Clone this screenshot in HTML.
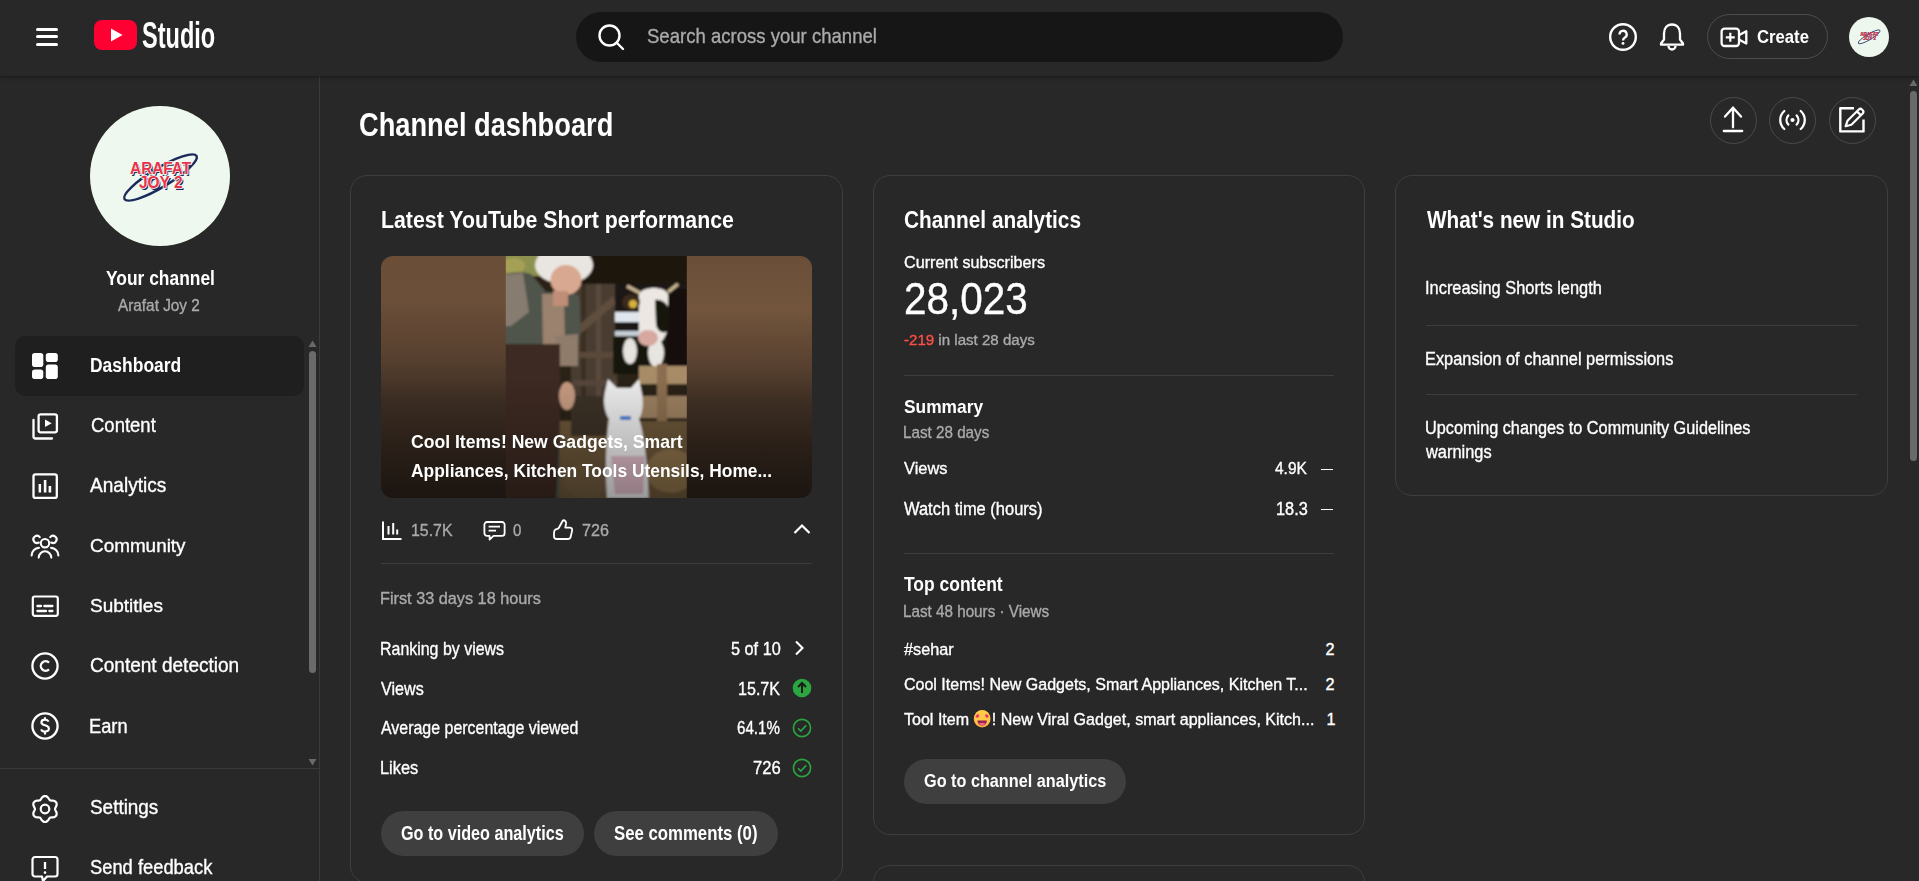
<!DOCTYPE html>
<html><head><meta charset="utf-8">
<style>
*{box-sizing:border-box;margin:0;padding:0}
html,body{width:1919px;height:881px;overflow:hidden;background:#282828;font-family:"Liberation Sans",sans-serif;color:#fff}
.abs{position:absolute}
svg{display:block}
#header{position:absolute;left:0;top:0;width:1919px;height:76px;background:#282828;box-shadow:0 1px 2px rgba(0,0,0,.22),0 2px 5px rgba(0,0,0,.12);z-index:5}
#sidebar{position:absolute;left:0;top:76px;width:320px;height:805px;border-right:1px solid #3a3a3a}
.t{position:absolute;white-space:nowrap;line-height:1;z-index:6;-webkit-text-stroke:0.35px currentColor}
.card{position:absolute;border:1px solid #3e3e3e;border-radius:17px}
.gray{color:#aaa}
.btn{position:absolute;background:#3f3f3f;border-radius:23px;font-weight:bold;color:#fff}
.div{position:absolute;height:1px;background:#3e3e3e}
.b{font-weight:bold}
.circ{width:47px;height:47px;border-radius:50%;border:1px solid #4a4a4a}
.emo{display:inline-block;width:18px;height:18px;vertical-align:-3px;margin:0 1px 0 4px}
</style></head><body>
<div id="header">
  <!-- hamburger -->
  <div class="abs" style="left:36px;top:28px;width:22px;height:3px;background:#fff;border-radius:2px"></div>
  <div class="abs" style="left:36px;top:35px;width:22px;height:3px;background:#fff;border-radius:2px"></div>
  <div class="abs" style="left:36px;top:43px;width:22px;height:3px;background:#fff;border-radius:2px"></div>
  <!-- logo -->
  <svg class="abs" style="left:94px;top:20px" width="44" height="30" viewBox="0 0 44 30"><rect x="0" y="0" width="43" height="30" rx="8" fill="#ff0033"/><path d="M17 8.5 L28.5 15 L17 21.5Z" fill="#fff"/></svg>
  <!-- search -->
  <div class="abs" style="left:576px;top:12px;width:767px;height:50px;background:#161616;border-radius:25px"></div>
  <svg class="abs" style="left:596px;top:22px" width="30" height="30" viewBox="0 0 30 30"><circle cx="13.5" cy="13.5" r="10" fill="none" stroke="#fff" stroke-width="2.4"/><path d="M20.5 20.5 L27 27" stroke="#fff" stroke-width="2.4" stroke-linecap="round"/></svg>
  <!-- help -->
  <svg class="abs" style="left:1607px;top:21px" width="32" height="32" viewBox="0 0 32 32"><circle cx="16" cy="16" r="12.8" fill="none" stroke="#fff" stroke-width="2.4"/><path d="M12.5 13.4 a3.6 3.6 0 1 1 5.4 3.1 c-1.3 0.8 -1.9 1.4 -1.9 3.1" fill="none" stroke="#fff" stroke-width="2.3"/><circle cx="16" cy="22.4" r="1.45" fill="#fff"/></svg>
  <!-- bell -->
  <svg class="abs" style="left:1658px;top:21px" width="28" height="32" viewBox="0 0 28 32"><path d="M14 3.5 c-5 0 -8 3.8 -8 9 v6 l-3 4 v1.2 h22 v-1.2 l-3 -4 v-6 c0 -5.2 -3 -9 -8 -9z" fill="none" stroke="#fff" stroke-width="2.3" stroke-linejoin="round"/><path d="M10.5 25 a3.5 3.5 0 0 0 7 0" fill="none" stroke="#fff" stroke-width="2.3"/></svg>
  <!-- create -->
  <div class="abs" style="left:1707px;top:14px;width:121px;height:45px;border:1px solid #4d4d4d;border-radius:23px"></div>
  <svg class="abs" style="left:1719px;top:25.6px" width="30" height="22" viewBox="0 0 30 22"><rect x="2.6" y="2.6" width="17.4" height="17.4" rx="3" fill="none" stroke="#fff" stroke-width="2.3"/><path d="M11.3 6.8 V15.8 M6.8 11.3 H15.8" stroke="#fff" stroke-width="2.2"/><path d="M20.3 9 L27.3 5.2 V17.6 L20.3 13.8" fill="none" stroke="#fff" stroke-width="2.3" stroke-linejoin="round"/></svg>
  <!-- avatar -->
  <div class="abs" style="left:1849px;top:17px;width:40px;height:40px;border-radius:50%;background:#eef7ee"></div>
  <svg class="abs" style="left:1856px;top:28px" width="26" height="18" viewBox="0 0 84 60">
  <ellipse cx="42.5" cy="29.5" rx="42" ry="9.5" transform="rotate(-31 42.5 29.5)" fill="none" stroke="#1b2a5c" stroke-width="2.6"/>
  <g font-family="Liberation Sans" font-weight="bold" font-size="16">
  <text x="13.5" y="28" textLength="61" lengthAdjust="spacingAndGlyphs" fill="#1b2a5c">ARAFAT</text>
  <text x="22.5" y="41.6" textLength="43.5" lengthAdjust="spacingAndGlyphs" fill="#1b2a5c">JOY 2</text>
  <text x="12.1" y="26.1" textLength="61" lengthAdjust="spacingAndGlyphs" fill="#e8334a">ARAFAT</text>
  <text x="21" y="39.8" textLength="43.5" lengthAdjust="spacingAndGlyphs" fill="#e8334a">JOY 2</text>
  </g>
</svg>
</div>

<div id="sidebar">
</div>
<!-- sidebar content (absolute page coords) -->
<div class="abs" style="left:90px;top:106px;width:140px;height:140px;border-radius:50%;background:#eef8ee"></div>
<svg class="abs" style="left:118px;top:148px" width="84" height="60" viewBox="0 0 84 60">
  <ellipse cx="42.5" cy="29.5" rx="42" ry="9.5" transform="rotate(-31 42.5 29.5)" fill="none" stroke="#1b2a5c" stroke-width="2.4"/>
  <g font-family="Liberation Sans" font-weight="bold" font-size="16">
  <text x="13.5" y="28" textLength="61" lengthAdjust="spacingAndGlyphs" fill="#1b2a5c">ARAFAT</text>
  <text x="22.5" y="41.6" textLength="43.5" lengthAdjust="spacingAndGlyphs" fill="#1b2a5c">JOY 2</text>
  <text x="12.1" y="26.1" textLength="61" lengthAdjust="spacingAndGlyphs" fill="#e8334a" stroke="#f4fbf4" stroke-width="1.6" paint-order="stroke">ARAFAT</text>
  <text x="21" y="39.8" textLength="43.5" lengthAdjust="spacingAndGlyphs" fill="#e8334a" stroke="#f4fbf4" stroke-width="1.6" paint-order="stroke">JOY 2</text>
  </g>
</svg>
<div class="abs" style="left:15px;top:336px;width:289px;height:60px;border-radius:11px;background:#1f1f1f"></div>
<!-- nav icons -->
<svg class="abs" style="left:30px;top:351px" width="30" height="30" viewBox="0 0 30 30">
  <rect x="2" y="2" width="11.3" height="14" rx="2.8" fill="#fff"/>
  <rect x="15.8" y="2" width="12" height="9" rx="2.8" fill="#fff"/>
  <rect x="2" y="18.6" width="11.3" height="9.4" rx="2.8" fill="#fff"/>
  <rect x="15.8" y="13.6" width="12" height="14.4" rx="2.8" fill="#fff"/>
</svg>
<svg class="abs" style="left:30px;top:411px" width="30" height="30" viewBox="0 0 30 30">
  <rect x="8.6" y="3.3" width="18.3" height="18" rx="2" fill="none" stroke="#fff" stroke-width="2.3"/>
  <path d="M3.5 9 V25.5 a2 2 0 0 0 2 2 H22" fill="none" stroke="#fff" stroke-width="2.3" stroke-linecap="round"/>
  <path d="M15 8.5 L21.7 12.3 L15 16Z" fill="#fff"/>
</svg>
<svg class="abs" style="left:30px;top:471px" width="30" height="30" viewBox="0 0 30 30">
  <rect x="3.5" y="3.3" width="23.3" height="23.6" rx="2" fill="none" stroke="#fff" stroke-width="2.3"/>
  <rect x="8.6" y="13" width="2.5" height="8.5" fill="#fff"/>
  <rect x="13.8" y="9" width="2.6" height="12.5" fill="#fff"/>
  <rect x="18.6" y="15" width="2.6" height="6.5" fill="#fff"/>
</svg>
<svg class="abs" style="left:30px;top:531px" width="30" height="30" viewBox="0 0 30 30"><circle cx="15" cy="12.2" r="4.2" fill="none" stroke="#fff" stroke-width="2.1"/><path d="M8.80 11.52 A3.6 3.6 0 1 1 9.76 6.09 M21.20 11.52 A3.6 3.6 0 1 0 20.24 6.09 M8.70 26.60 A6.3 6.3 0 0 1 21.30 26.60 M1.60 24.50 A7.6 7.6 0 0 1 8.93 16.90 M28.40 24.50 A7.6 7.6 0 0 0 21.07 16.90" fill="none" stroke="#fff" stroke-width="2.1" stroke-linecap="round"/></svg>
<svg class="abs" style="left:30px;top:591px" width="30" height="30" viewBox="0 0 30 30">
  <rect x="2.8" y="5.5" width="25" height="19.3" rx="2" fill="none" stroke="#fff" stroke-width="2.2"/>
  <path d="M7.4 15 H11 M14.3 15 H22.4 M7.4 20 H16 M19.4 20 H22.4" stroke="#fff" stroke-width="2.3" stroke-linecap="round"/>
</svg>
<svg class="abs" style="left:30px;top:651px" width="30" height="30" viewBox="0 0 30 30">
  <circle cx="15" cy="15" r="12.6" fill="none" stroke="#fff" stroke-width="2.3"/>
  <path d="M19 11.6 a4.8 4.8 0 1 0 0 6.8" fill="none" stroke="#fff" stroke-width="2.3"/>
</svg>
<svg class="abs" style="left:30px;top:711px" width="30" height="30" viewBox="0 0 30 30">
  <circle cx="15" cy="15" r="12.6" fill="none" stroke="#fff" stroke-width="2.3"/>
  <path d="M18.6 10.6 c-0.6 -1.3 -2 -2 -3.6 -2 c-2.1 0 -3.6 1.1 -3.6 2.8 c0 3.9 7.5 2 7.5 6.1 c0 1.8 -1.7 3 -3.9 3 c-1.8 0 -3.3 -0.8 -3.9 -2.2 M15 6.3 V8.6 M15 20.5 V23.6" fill="none" stroke="#fff" stroke-width="2.1"/>
</svg>
<div class="abs" style="left:0;top:768px;width:319px;height:1px;background:#3a3a3a"></div>
<svg class="abs" style="left:30px;top:794px" width="30" height="30" viewBox="0 0 30 30">
  <path id="gear" fill="none" stroke="#fff" stroke-width="2.2" stroke-linejoin="round" d="M15.00 2.00 L15.84 2.12 L16.65 2.47 L17.39 3.00 L18.03 3.68 L18.59 4.42 L19.07 5.17 L19.52 5.83 L20.00 6.34 L20.68 6.50 L21.48 6.55 L22.37 6.60 L23.29 6.71 L24.20 6.93 L25.03 7.30 L25.73 7.83 L26.26 8.50 L26.58 9.29 L26.68 10.16 L26.58 11.07 L26.32 11.97 L25.96 12.82 L25.55 13.61 L25.20 14.33 L25.00 15.00 L25.20 15.67 L25.55 16.39 L25.96 17.18 L26.32 18.03 L26.58 18.93 L26.68 19.84 L26.58 20.71 L26.26 21.50 L25.73 22.17 L25.03 22.70 L24.20 23.07 L23.29 23.29 L22.37 23.40 L21.48 23.45 L20.68 23.50 L20.00 23.66 L19.52 24.17 L19.07 24.83 L18.59 25.58 L18.03 26.32 L17.39 27.00 L16.65 27.53 L15.84 27.88 L15.00 28.00 L14.16 27.88 L13.35 27.53 L12.61 27.00 L11.97 26.32 L11.41 25.58 L10.93 24.83 L10.48 24.17 L10.00 23.66 L9.32 23.50 L8.52 23.45 L7.63 23.40 L6.71 23.29 L5.80 23.07 L4.97 22.70 L4.27 22.17 L3.74 21.50 L3.42 20.71 L3.32 19.84 L3.42 18.93 L3.68 18.03 L4.04 17.18 L4.45 16.39 L4.80 15.67 L5.00 15.00 L4.80 14.33 L4.45 13.61 L4.04 12.82 L3.68 11.97 L3.42 11.07 L3.32 10.16 L3.42 9.29 L3.74 8.50 L4.27 7.83 L4.97 7.30 L5.80 6.93 L6.71 6.71 L7.63 6.60 L8.52 6.55 L9.32 6.50 L10.00 6.34 L10.48 5.83 L10.93 5.17 L11.41 4.42 L11.97 3.68 L12.61 3.00 L13.35 2.47 L14.16 2.12Z"/>
  <circle cx="15" cy="15" r="4.3" fill="none" stroke="#fff" stroke-width="2.2"/>
</svg>
<svg class="abs" style="left:30px;top:854px" width="30" height="30" viewBox="0 0 30 30">
  <path d="M5 3 H25 a2.5 2.5 0 0 1 2.5 2.5 V20 a2.5 2.5 0 0 1 -2.5 2.5 H17 L13 27 L12 22.5 H5 a2.5 2.5 0 0 1 -2.5 -2.5 V5.5 a2.5 2.5 0 0 1 2.5 -2.5Z" fill="none" stroke="#fff" stroke-width="2.2" stroke-linejoin="round"/>
  <path d="M15 8 V15" stroke="#fff" stroke-width="2.3"/>
  <circle cx="15" cy="18.6" r="1.3" fill="#fff"/>
</svg>
<!-- nav labels -->
<!-- sidebar scrollbar -->
<svg class="abs" style="left:307px;top:339px" width="11" height="9" viewBox="0 0 11 9"><path d="M1.5 8 L5.5 1.5 L9.5 8Z" fill="#6a6a6a"/></svg>
<div class="abs" style="left:309px;top:351px;width:7px;height:322px;border-radius:4px;background:#6a6a6a"></div>
<svg class="abs" style="left:307px;top:758px" width="11" height="9" viewBox="0 0 11 9"><path d="M1.5 1 L5.5 7.5 L9.5 1Z" fill="#6a6a6a"/></svg>

<div id="main">
<!-- action circles -->
<div class="abs circ" style="left:1710px;top:97px"></div>
<div class="abs circ" style="left:1769px;top:97px"></div>
<div class="abs circ" style="left:1829px;top:97px"></div>
<svg class="abs" style="left:1720px;top:104px" width="26" height="30" viewBox="0 0 26 30"><path d="M13 4 V23.3 M5 12.6 L13 3.8 L21 12.6 M3.8 27 H22.2" fill="none" stroke="#fff" stroke-width="2.3" stroke-linecap="round"/></svg>
<svg class="abs" style="left:1777px;top:105px" width="31" height="30" viewBox="0 0 31 30"><circle cx="15.5" cy="15" r="2.1" fill="#fff"/><path d="M11.3 10.4 a7 7 0 0 0 0 9.2 M19.7 10.4 a7 7 0 0 1 0 9.2 M7.3 6 a12 12 0 0 0 0 18 M23.7 6 a12 12 0 0 1 0 18" fill="none" stroke="#fff" stroke-width="2.3" stroke-linecap="round"/></svg>
<svg class="abs" style="left:1837px;top:104px" width="30" height="30" viewBox="0 0 30 30"><path d="M17 4.2 H3.3 V27.4 H26.5 V15.5" fill="none" stroke="#fff" stroke-width="2.4" stroke-linejoin="round"/><path d="M8.6 22.3 L10.5 16.8 L21.8 5.5 a2.2 2.2 0 0 1 3.1 0 L25.7 6.3 a2.2 2.2 0 0 1 0 3.1 L14.4 20.7 Z M20 7.4 L23.8 11.2" fill="none" stroke="#fff" stroke-width="2.2" stroke-linejoin="round"/></svg>

<!-- cards -->
<div class="card" style="left:350px;top:175px;width:493px;height:708px"></div>
<div class="card" style="left:873px;top:175px;width:492px;height:660px"></div>
<div class="card" style="left:873px;top:865px;width:492px;height:300px"></div>
<div class="card" style="left:1395px;top:175px;width:493px;height:321px"></div>

<!-- card 1 -->
<div class="abs" id="thumb" style="left:381px;top:256px;width:431px;height:242px;border-radius:12px;overflow:hidden"><svg width="431" height="242" viewBox="0 0 431 242">
<defs>
<linearGradient id="sideL" x1="0" y1="0" x2="0" y2="1"><stop offset="0" stop-color="#6a4e38"/><stop offset="0.18" stop-color="#6b4f39"/><stop offset="0.39" stop-color="#5a4230"/><stop offset="0.6" stop-color="#3e2f24"/><stop offset="0.8" stop-color="#34271e"/><stop offset="1" stop-color="#2a2019"/></linearGradient>
<linearGradient id="sideR" x1="0" y1="0" x2="0" y2="1"><stop offset="0" stop-color="#6a4e38"/><stop offset="0.22" stop-color="#72553c"/><stop offset="0.42" stop-color="#5c4432"/><stop offset="0.6" stop-color="#413125"/><stop offset="0.8" stop-color="#34271e"/><stop offset="1" stop-color="#2a2019"/></linearGradient>
<linearGradient id="ovl" x1="0" y1="0" x2="0" y2="1"><stop offset="0" stop-color="#000" stop-opacity="0"/><stop offset="0.5" stop-color="#000" stop-opacity="0"/><stop offset="1" stop-color="#000" stop-opacity="0.35"/></linearGradient>
<filter id="bl" x="-5%" y="-5%" width="110%" height="110%"><feGaussianBlur stdDeviation="1.3"/></filter>
<clipPath id="cc"><rect x="124.8" y="0" width="181" height="242"/></clipPath>
</defs>
<rect x="0" y="0" width="125" height="242" fill="url(#sideL)"/>
<rect x="305" y="0" width="126" height="242" fill="url(#sideR)"/>
<g clip-path="url(#cc)"><g filter="url(#bl)">
 <rect x="120" y="-5" width="190" height="250" fill="#2c2119"/>
 <rect x="190" y="8" width="46" height="165" fill="#4a3c30"/>
 <rect x="200" y="15" width="5" height="150" fill="#3a2e24"/>
 <rect x="215" y="15" width="5" height="150" fill="#5a4a3c"/>
 <path d="M194 72 L232 40 L235 48 L197 80Z" fill="#5e4e3e"/>
 <rect x="192" y="96" width="44" height="6" fill="#5a4a3a"/>
 <rect x="192" y="124" width="44" height="6" fill="#54443a"/>
 <rect x="200" y="-5" width="110" height="33" fill="#1c1510"/>
 <rect x="234" y="28" width="76" height="60" fill="#1e1712"/>
 <rect x="120" y="-5" width="40" height="25" fill="#8d9150"/>
 <ellipse cx="132" cy="10" rx="12" ry="8" fill="#a5a056"/>
 <rect x="234" y="56" width="25" height="10" fill="#dfe6ee"/>
 <rect x="234" y="75" width="25" height="6" fill="#c4ccd4"/>
 <rect x="232" y="80" width="56" height="38" fill="#141210"/>
 <ellipse cx="249" cy="95" rx="7" ry="13" fill="#e6e2de"/>
 <ellipse cx="275" cy="97" rx="8" ry="14" fill="#e8e4e0"/>
 <rect x="286" y="33" width="25" height="78" fill="#121110"/>
 <path d="M258 38 C262 30 284 30 287 38 L287 70 C285 84 278 90 270 89 C261 88 257 80 258 72Z" fill="#ece7e2"/>
 <path d="M274 44 C281 43 288 48 288 56 L288 74 C283 79 276 76 275 68Z" fill="#151311"/>
 <ellipse cx="267" cy="82" rx="10" ry="8" fill="#d6a8a0"/>
 <path d="M246 30 L259 37 M297 28 L287 36" stroke="#c9b692" stroke-width="3.5"/>
 <ellipse cx="250" cy="46" rx="9" ry="8" fill="#3a2a1a"/>
 <ellipse cx="252" cy="48" rx="4" ry="4" fill="#d8b040"/>
 <rect x="258" y="110" width="52" height="18" fill="#a88c68"/>
 <rect x="258" y="140" width="52" height="22" fill="#9c8060"/>
 <rect x="276" y="108" width="10" height="72" fill="#8a6e50"/>
 <rect x="178" y="165" width="132" height="80" fill="#6a5438"/><ellipse cx="290" cy="215" rx="25" ry="22" fill="#8a7048"/><ellipse cx="205" cy="225" rx="22" ry="18" fill="#6e5a3e"/>
 <rect x="190" y="140" width="36" height="40" fill="#3a3028"/>
 <path d="M120 19 C130 16 142 15 150 18 L165 36 L190 36 L198 40 C200 60 200 76 197 91 L179 91 L179 242 L120 242Z" fill="#50544c"/>
 <path d="M120 19 L142 17 L148 56 L130 70 L120 70Z" fill="#877b70"/>
 <path d="M161 38 L183 38 L184 90 L162 90Z" fill="#9a826e"/>
 <path d="M174 80 L197 78 L197 110 L176 110Z" fill="#8f7b6a"/>
 <path d="M120 88 L179 88 L179 160 C178 200 176 230 175 242 L120 242Z" fill="#3c2c24"/>
 <ellipse cx="186" cy="140" rx="8" ry="14" fill="#c49a80"/>
 <ellipse cx="183" cy="9" rx="29" ry="19" fill="#e9e5e1"/>
 <ellipse cx="185" cy="24" rx="15.5" ry="15" fill="#d8a890"/>
 <rect x="172" y="35" width="15" height="15" fill="#c08e78"/>
 <path d="M224 136 L227 123 L236 132 L250 132 L258 123 L261 138 C263 150 261 158 258 163 C266 185 268 242 268 242 L226 242 C224 210 225 185 228 163 C223 155 222 145 224 136Z" fill="#edecec"/>
 <rect x="239" y="160" width="11" height="4" fill="#3a80d0"/>
 <path d="M230 200 L264 200 L262 238 L234 238Z" fill="#c87090" opacity="0.4"/>
</g></g>
<rect x="0" y="0" width="431" height="242" fill="url(#ovl)"/>
</svg>
</div>
<svg class="abs" style="left:380px;top:519px" width="24" height="24" viewBox="0 0 24 24"><path d="M3 2.5 V20 H21.5" fill="none" stroke="#fff" stroke-width="2"/><path d="M8.5 7 V15.5 M13.2 4 V15.5 M17.2 10.5 V15.5" stroke="#fff" stroke-width="2"/></svg>
<svg class="abs" style="left:482px;top:519px" width="26" height="24" viewBox="0 0 26 24"><path d="M5 3 H20 a2.6 2.6 0 0 1 2.6 2.6 V14.3 a2.6 2.6 0 0 1 -2.6 2.6 H11.5 L7.6 20.6 V16.9 H5 a2.6 2.6 0 0 1 -2.6 -2.6 V5.6 a2.6 2.6 0 0 1 2.6 -2.6Z" fill="none" stroke="#fff" stroke-width="1.8" stroke-linejoin="round"/><path d="M6.6 7.6 H18 M6.6 11.6 H14" stroke="#fff" stroke-width="1.8"/></svg>
<svg class="abs" style="left:551px;top:518px" width="24" height="24" viewBox="0 0 24 24"><path d="M4.2 11.8 C3.2 12.6 3 13.5 3 15 V18.5 C3 20.3 4.3 21 6 21 H16.8 C18.4 21 19.4 20.2 19.7 18.7 L21.1 12.6 C21.5 10.8 20.4 9.6 18.7 9.6 H14.3 L15 6 C15.4 3.6 14 2 12 2.3 L7.6 10.2 C6.6 11.3 5.3 11 4.2 11.8Z" fill="none" stroke="#fff" stroke-width="1.8" stroke-linejoin="round"/></svg>
<svg class="abs" style="left:791px;top:519px" width="22" height="20" viewBox="0 0 22 20"><path d="M3.5 14 L11 6.5 L18.5 14" fill="none" stroke="#fff" stroke-width="2.2"/></svg>
<div class="div" style="left:381px;top:563px;width:431px"></div>
<svg class="abs" style="left:790px;top:638px" width="20" height="20" viewBox="0 0 20 20"><path d="M6 3.5 L12.5 10 L6 16.5" fill="none" stroke="#fff" stroke-width="2.1"/></svg>
<svg class="abs" style="left:791px;top:677px" width="22" height="22" viewBox="0 0 22 22"><circle cx="11" cy="11" r="9.3" fill="#2ba640"/><path d="M11 16 V6.5 M7 10 L11 6 L15 10" fill="none" stroke="#1a1a1a" stroke-width="2"/></svg>
<svg class="abs" style="left:791px;top:717px" width="22" height="22" viewBox="0 0 22 22"><circle cx="11" cy="11" r="8.6" fill="none" stroke="#2ba640" stroke-width="1.6"/><path d="M7 11.2 L9.8 14 L15.2 8.4" fill="none" stroke="#2ba640" stroke-width="1.6"/></svg>
<svg class="abs" style="left:791px;top:757px" width="22" height="22" viewBox="0 0 22 22"><circle cx="11" cy="11" r="8.6" fill="none" stroke="#2ba640" stroke-width="1.6"/><path d="M7 11.2 L9.8 14 L15.2 8.4" fill="none" stroke="#2ba640" stroke-width="1.6"/></svg>
<div class="btn" style="left:381px;top:811px;width:203px;height:45px"></div>
<div class="btn" style="left:594px;top:811px;width:184px;height:45px"></div>

<!-- card 2 -->
<div class="div" style="left:904px;top:375px;width:430px"></div>
<div class="abs" style="left:1321px;top:468.6px;width:11.5px;height:1.7px;background:#fff"></div>
<div class="abs" style="left:1321px;top:508.5px;width:11.5px;height:1.7px;background:#fff"></div>
<div class="div" style="left:904px;top:553px;width:430px"></div>
<div class="btn" style="left:904px;top:759px;width:222px;height:45px"></div>

<!-- card 3 -->
<div class="div" style="left:1426px;top:325px;width:431px"></div>
<div class="div" style="left:1426px;top:394px;width:431px"></div>

<!-- page scrollbar -->
<svg class="abs" style="left:1908px;top:78px" width="11" height="9" viewBox="0 0 11 9"><path d="M1.5 8 L5.5 1.5 L9.5 8Z" fill="#6a6a6a"/></svg>
<div class="abs" style="left:1910px;top:91px;width:7px;height:370px;border-radius:4px;background:#6a6a6a"></div>
</div>
<div class="t" id="studio" style="left:142.00px;top:17.96px;font-size:36.52px;color:#fff;font-weight:bold;-webkit-text-stroke:0;transform:scaleX(0.6441);transform-origin:0 0;">Studio</div>
<div class="t" id="search" style="left:646.50px;top:26.13px;font-size:20.43px;color:#aaa;transform:scaleX(0.9082);transform-origin:0 0;">Search across your channel</div>
<div class="t" id="create" style="left:1756.70px;top:28.23px;font-size:18.55px;color:#fff;font-weight:bold;-webkit-text-stroke:0;transform:scaleX(0.9002);transform-origin:0 0;">Create</div>
<div class="t" id="ych" style="left:105.90px;top:268.62px;font-size:19.86px;color:#fff;font-weight:bold;-webkit-text-stroke:0;transform:scaleX(0.8758);transform-origin:0 0;">Your channel</div>
<div class="t" id="ajoy" style="left:118.00px;top:297.08px;font-size:16.38px;color:#aaa;transform:scaleX(0.9370);transform-origin:0 0;">Arafat Joy 2</div>
<div class="t" id="n1" style="left:89.70px;top:354.75px;font-size:20.29px;color:#fff;font-weight:bold;-webkit-text-stroke:0;transform:scaleX(0.8618);transform-origin:0 0;">Dashboard</div>
<div class="t" id="n2" style="left:90.50px;top:415.62px;font-size:19.86px;color:#fff;transform:scaleX(0.9316);transform-origin:0 0;">Content</div>
<div class="t" id="n3" style="left:90.20px;top:474.88px;font-size:20.14px;color:#fff;transform:scaleX(0.9477);transform-origin:0 0;">Analytics</div>
<div class="t" id="n4" style="left:90.00px;top:536.12px;font-size:19.28px;color:#fff;transform:scaleX(0.9806);transform-origin:0 0;">Community</div>
<div class="t" id="n5" style="left:90.00px;top:596.36px;font-size:18.99px;color:#fff;transform:scaleX(1.0016);transform-origin:0 0;">Subtitles</div>
<div class="t" id="n6" style="left:90.00px;top:656.25px;font-size:19.71px;color:#fff;transform:scaleX(0.9666);transform-origin:0 0;">Content detection</div>
<div class="t" id="n7" style="left:89.10px;top:715.51px;font-size:20.58px;color:#fff;transform:scaleX(0.8888);transform-origin:0 0;">Earn</div>
<div class="t" id="n8" style="left:90.00px;top:798.25px;font-size:19.71px;color:#fff;transform:scaleX(0.9605);transform-origin:0 0;">Settings</div>
<div class="t" id="n9" style="left:90.00px;top:858.49px;font-size:19.42px;color:#fff;transform:scaleX(0.9448);transform-origin:0 0;">Send feedback</div>
<div class="t" id="cd" style="left:359.30px;top:109.03px;font-size:32.32px;color:#fff;font-weight:bold;-webkit-text-stroke:0;transform:scaleX(0.8431);transform-origin:0 0;">Channel dashboard</div>
<div class="t" id="c1t" style="left:380.70px;top:208.06px;font-size:24.64px;color:#fff;font-weight:bold;-webkit-text-stroke:0;transform:scaleX(0.8656);transform-origin:0 0;">Latest YouTube Short performance</div>
<div class="t" id="ov1" style="left:411.20px;top:431.74px;font-size:19.13px;color:#fff;font-weight:bold;-webkit-text-stroke:0;transform:scaleX(0.9203);transform-origin:0 0;">Cool Items! New Gadgets, Smart</div>
<div class="t" id="ov2" style="left:411.00px;top:460.62px;font-size:19.28px;color:#fff;font-weight:bold;-webkit-text-stroke:0;transform:scaleX(0.9025);transform-origin:0 0;">Appliances, Kitchen Tools Utensils, Home...</div>
<div class="t" id="sv" style="left:410.90px;top:522.22px;font-size:17.39px;color:#aaa;transform:scaleX(0.9148);transform-origin:0 0;">15.7K</div>
<div class="t" id="sc" style="left:513.40px;top:522.22px;font-size:17.39px;color:#aaa;transform:scaleX(0.8675);transform-origin:0 0;">0</div>
<div class="t" id="sl" style="left:582.00px;top:522.22px;font-size:17.39px;color:#aaa;transform:scaleX(0.9282);transform-origin:0 0;">726</div>
<div class="t" id="f33" style="left:380.00px;top:590.96px;font-size:16.52px;color:#aaa;transform:scaleX(0.9846);transform-origin:0 0;">First 33 days 18 hours</div>
<div class="t" id="rk" style="left:380.00px;top:640.72px;font-size:17.97px;color:#fff;transform:scaleX(0.8879);transform-origin:0 0;">Ranking by views</div>
<div class="t" id="rkv" style="left:731.30px;top:640.72px;font-size:17.97px;color:#fff;transform:scaleX(0.9061);transform-origin:0 0;">5 of 10</div>
<div class="t" id="vw" style="left:381.00px;top:680.72px;font-size:17.97px;color:#fff;transform:scaleX(0.8976);transform-origin:0 0;">Views</div>
<div class="t" id="vwv" style="left:737.90px;top:680.72px;font-size:17.97px;color:#fff;transform:scaleX(0.8952);transform-origin:0 0;">15.7K</div>
<div class="t" id="apv" style="left:381.00px;top:719.72px;font-size:17.97px;color:#fff;transform:scaleX(0.8879);transform-origin:0 0;">Average percentage viewed</div>
<div class="t" id="apvv" style="left:736.80px;top:719.72px;font-size:17.97px;color:#fff;transform:scaleX(0.8428);transform-origin:0 0;">64.1%</div>
<div class="t" id="lk" style="left:380.00px;top:759.72px;font-size:17.97px;color:#fff;transform:scaleX(0.9115);transform-origin:0 0;">Likes</div>
<div class="t" id="lkv" style="left:752.70px;top:759.72px;font-size:17.97px;color:#fff;transform:scaleX(0.9282);transform-origin:0 0;">726</div>
<div class="t" id="b1" style="left:401.40px;top:823.99px;font-size:19.42px;color:#fff;font-weight:bold;-webkit-text-stroke:0;transform:scaleX(0.8336);transform-origin:0 0;">Go to video analytics</div>
<div class="t" id="b2" style="left:613.80px;top:823.99px;font-size:19.42px;color:#fff;font-weight:bold;-webkit-text-stroke:0;transform:scaleX(0.8638);transform-origin:0 0;">See comments (0)</div>
<div class="t" id="c2t" style="left:904.40px;top:207.55px;font-size:24.06px;color:#fff;font-weight:bold;-webkit-text-stroke:0;transform:scaleX(0.8658);transform-origin:0 0;">Channel analytics</div>
<div class="t" id="cs" style="left:904.00px;top:254.70px;font-size:15.65px;color:#fff;transform:scaleX(1.0333);transform-origin:0 0;">Current subscribers</div>
<div class="t" id="num" style="left:904.20px;top:277.17px;font-size:43.91px;color:#fff;transform:scaleX(0.9220);transform-origin:0 0;">28,023</div>
<div class="t" id="d219" style="left:904.00px;top:332.07px;font-size:15.22px;color:#aaa;transform:scaleX(0.9906);transform-origin:0 0;"><span style="color:#ff4e45">-219</span> in last 28 days</div>
<div class="t" id="sum" style="left:904.00px;top:396.62px;font-size:19.28px;color:#fff;font-weight:bold;-webkit-text-stroke:0;transform:scaleX(0.9002);transform-origin:0 0;">Summary</div>
<div class="t" id="l28" style="left:903.00px;top:424.20px;font-size:16.23px;color:#aaa;transform:scaleX(0.9381);transform-origin:0 0;">Last 28 days</div>
<div class="t" id="v2" style="left:904.00px;top:460.46px;font-size:17.10px;color:#fff;transform:scaleX(0.9602);transform-origin:0 0;">Views</div>
<div class="t" id="v2v" style="left:1274.90px;top:460.46px;font-size:17.10px;color:#fff;transform:scaleX(0.9046);transform-origin:0 0;">4.9K</div>
<div class="t" id="wt" style="left:904.00px;top:501.09px;font-size:17.54px;color:#fff;transform:scaleX(0.9396);transform-origin:0 0;">Watch time (hours)</div>
<div class="t" id="wtv" style="left:1275.80px;top:501.09px;font-size:17.54px;color:#fff;transform:scaleX(0.9313);transform-origin:0 0;">18.3</div>
<div class="t" id="tc" style="left:904.00px;top:575.49px;font-size:19.42px;color:#fff;font-weight:bold;-webkit-text-stroke:0;transform:scaleX(0.9001);transform-origin:0 0;">Top content</div>
<div class="t" id="l48" style="left:903.00px;top:603.70px;font-size:15.65px;color:#aaa;transform:scaleX(0.9734);transform-origin:0 0;">Last 48 hours · Views</div>
<div class="t" id="t1" style="left:904.00px;top:641.20px;font-size:16.23px;color:#fff;transform:scaleX(1.0005);transform-origin:0 0;">#sehar</div>
<div class="t" id="t2" style="left:904.00px;top:676.20px;font-size:16.23px;color:#fff;transform:scaleX(0.9869);transform-origin:0 0;">Cool Items! New Gadgets, Smart Appliances, Kitchen T...</div>
<div class="t" id="t3" style="left:904.00px;top:710.20px;font-size:16.23px;color:#fff;transform:scaleX(0.9893);transform-origin:0 0;">Tool Item<span class="emo"><svg width="18" height="18" viewBox="0 0 18 18"><circle cx="9" cy="9" r="8.5" fill="#f9a83a"/><circle cx="9" cy="8" r="8" fill="#ffc94a"/><path d="M3.2 5.3 c0.8-1.6 3.2-1.2 2.8 0.8 l-1.6 2 l-2-1 c-0.4-0.5 0.2-1.3 0.8-1.8z M14.8 5.3 c-0.8-1.6 -3.2-1.2 -2.8 0.8 l1.6 2 l2-1 c0.4-0.5 -0.2-1.3 -0.8-1.8z" fill="#f0306a"/><path d="M4.2 10.5 h9.6 c0 3 -2.2 5 -4.8 5 s-4.8 -2 -4.8 -5z" fill="#9b1f4a"/><path d="M5.5 13.6 c1 1.2 2.3 1.8 3.5 1.8 s2.5 -0.6 3.5 -1.8 c-1 -0.6 -2.2 -0.9 -3.5 -0.9 s-2.5 0.3 -3.5 0.9z" fill="#f6639a"/></svg></span>! New Viral Gadget, smart appliances, Kitch...</div>
<div class="t" id="t1v" style="left:1325.50px;top:641.20px;font-size:16.23px;color:#fff;">2</div>
<div class="t" id="t2v" style="left:1325.50px;top:676.20px;font-size:16.23px;color:#fff;">2</div>
<div class="t" id="t3v" style="left:1326.50px;top:711.20px;font-size:16.23px;color:#fff;">1</div>
<div class="t" id="b3" style="left:923.70px;top:772.49px;font-size:18.84px;color:#fff;font-weight:bold;-webkit-text-stroke:0;transform:scaleX(0.8621);transform-origin:0 0;">Go to channel analytics</div>
<div class="t" id="c3t" style="left:1426.60px;top:208.18px;font-size:24.49px;color:#fff;font-weight:bold;-webkit-text-stroke:0;transform:scaleX(0.8468);transform-origin:0 0;">What's new in Studio</div>
<div class="t" id="w1" style="left:1425.00px;top:279.97px;font-size:17.68px;color:#fff;transform:scaleX(0.9282);transform-origin:0 0;">Increasing Shorts length</div>
<div class="t" id="w2" style="left:1425.00px;top:350.97px;font-size:17.68px;color:#fff;transform:scaleX(0.9263);transform-origin:0 0;">Expansion of channel permissions</div>
<div class="t" id="w3" style="left:1425.00px;top:419.85px;font-size:17.83px;color:#fff;transform:scaleX(0.9123);transform-origin:0 0;">Upcoming changes to Community Guidelines</div>
<div class="t" id="w4" style="left:1426.00px;top:443.85px;font-size:17.83px;color:#fff;transform:scaleX(0.9202);transform-origin:0 0;">warnings</div>
</body></html>
